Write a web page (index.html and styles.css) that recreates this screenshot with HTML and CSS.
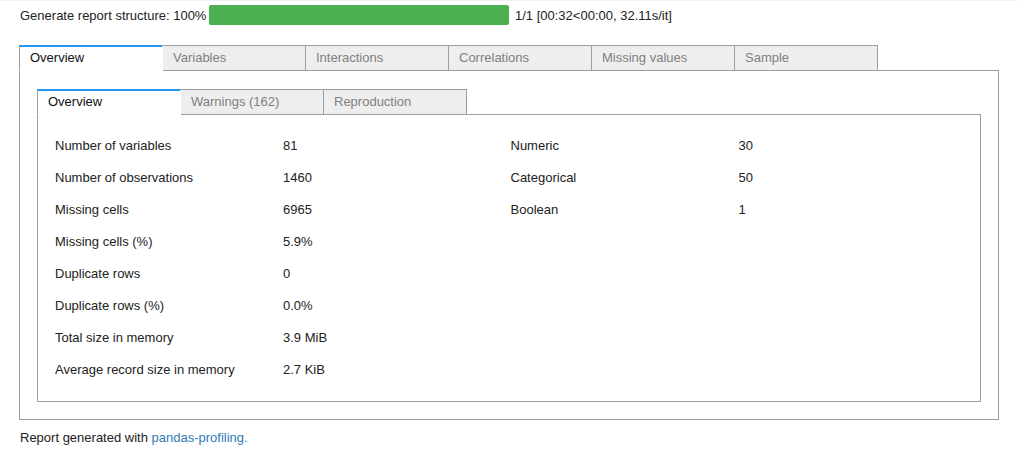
FILE: index.html
```html
<!DOCTYPE html>
<html>
<head>
<meta charset="utf-8">
<link rel="stylesheet" href="styles.css">
</head>
<body>
<div class="progress">
  <span class="progress-label">Generate report structure: 100%</span>
  <div class="bar"><div class="bar-fill"></div></div>
  <span class="progress-info">1/1 [00:32&lt;00:00, 32.11s/it]</span>
</div>

<div class="tabs outer">
  <div class="tabbar">
    <div class="tab active">Overview</div>
    <div class="tab">Variables</div>
    <div class="tab">Interactions</div>
    <div class="tab">Correlations</div>
    <div class="tab">Missing values</div>
    <div class="tab">Sample</div>
  </div>
  <div class="panel outer-panel">
    <div class="tabs inner">
      <div class="tabbar">
        <div class="tab active">Overview</div>
        <div class="tab">Warnings (162)</div>
        <div class="tab">Reproduction</div>
      </div>
      <div class="panel inner-panel">
        <div class="stats">
          <div class="col">
            <div class="row"><span class="k">Number of variables</span><span class="v">81</span></div>
            <div class="row"><span class="k">Number of observations</span><span class="v">1460</span></div>
            <div class="row"><span class="k">Missing cells</span><span class="v">6965</span></div>
            <div class="row"><span class="k">Missing cells (%)</span><span class="v">5.9%</span></div>
            <div class="row"><span class="k">Duplicate rows</span><span class="v">0</span></div>
            <div class="row"><span class="k">Duplicate rows (%)</span><span class="v">0.0%</span></div>
            <div class="row"><span class="k">Total size in memory</span><span class="v">3.9 MiB</span></div>
            <div class="row"><span class="k">Average record size in memory</span><span class="v">2.7 KiB</span></div>
          </div>
          <div class="col">
            <div class="row"><span class="k">Numeric</span><span class="v">30</span></div>
            <div class="row"><span class="k">Categorical</span><span class="v">50</span></div>
            <div class="row"><span class="k">Boolean</span><span class="v">1</span></div>
          </div>
        </div>
      </div>
    </div>
  </div>
</div>

<p class="footer">Report generated with <a href="#">pandas-profiling.</a></p>
</body>
</html>
```

FILE: styles.css
```css
html, body {
  margin: 0;
  padding: 0;
  background: #fff;
}
body {
  font-family: "Liberation Sans", Arial, sans-serif;
  font-size: 13px;
  color: #222;
  border-top: 1px solid #f0f0f0;
}
.progress {
  display: flex;
  align-items: center;
  height: 20px;
  margin: 4px 0 0 20px;
}
.progress-label {
  width: 189px;
  white-space: nowrap;
}
.bar {
  width: 300px;
  height: 20px;
  background: #eee;
  border-radius: 2px;
  overflow: hidden;
}
.bar-fill {
  width: 100%;
  height: 100%;
  background: #4caf50;
}
.progress-info {
  margin-left: 6px;
  white-space: nowrap;
}
.tabs.outer {
  margin: 20px 0 0 19px;
  width: 980px;
}
.tabbar {
  display: flex;
  height: 25px;
}
.tab {
  box-sizing: border-box;
  flex: 0 0 144px;
  height: 26px;
  margin-left: -1px;
  padding: 4px 0 0 10px;
  border: 1px solid #9e9e9e;
  background: #eeeeee;
  color: #808080;
  line-height: 16px;
  white-space: nowrap;
  position: relative;
}
.tab:first-child {
  margin-left: 0;
}
.tab.active {
  background: #fff;
  color: #111;
  border-top: 2px solid #2196f3;
  border-bottom: 1px solid #fff;
  border-right-color: transparent;
  padding-top: 3px;
  z-index: 2;
}
.panel {
  border: 1px solid #9e9e9e;
  background: #fff;
  position: relative;
  z-index: 1;
}
.outer-panel {
  box-sizing: border-box;
  height: 350px;
  padding: 18px 17px 17px 17px;
}
.inner-panel {
  box-sizing: border-box;
  height: 288px;
  padding: 14px 17px 16px 17px;
}
.stats {
  display: flex;
}
.col {
  width: 456px;
  display: flex;
  flex-direction: column;
}
.col + .col {
  margin-left: 3px;
}
.row {
  display: flex;
  height: 32px;
  align-items: center;
}
.k {
  width: 228px;
}
.footer {
  margin: 10px 0 0 20px;
}
.footer a {
  color: #337ab7;
  text-decoration: none;
}
```
